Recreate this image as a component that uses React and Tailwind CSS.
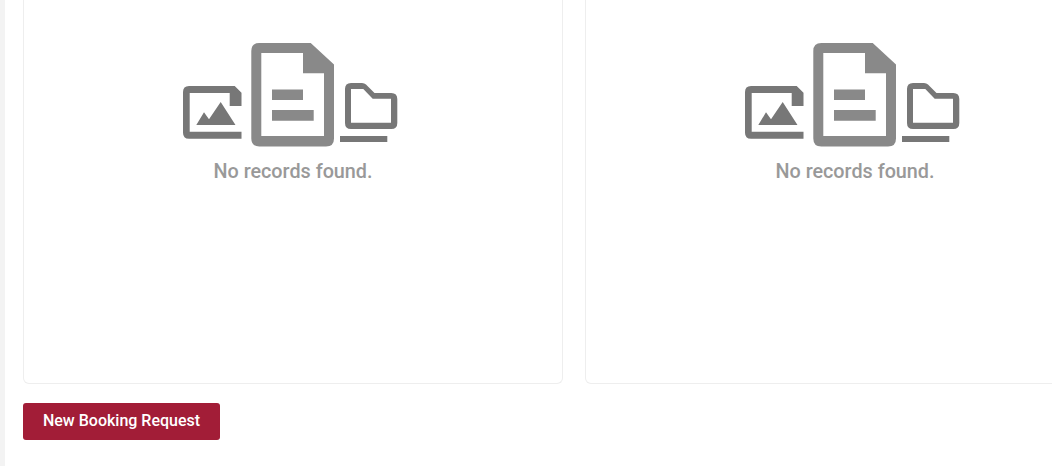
function EmptyIcon() {
  return (
    <svg width="215" height="104" viewBox="183 43 215 104" className="block ml-[-5px]">
      <path fill="#777777" fillRule="evenodd" d="M189 86H234.7L241.5 92.7V106H229.7V93H189.7V131.7H241.5V138.7H189Q183 138.7 183 132.7V92Q183 86 189 86Z" />
      <path fill="#777777" d="M196.3 125L204 112.3L209 119.3L220.7 102L235.5 125Z" />
      <path fill="#898989" fillRule="evenodd" d="M259.3 43H310.7L334 64.5V138.5Q334 146.5 326 146.5H259.3Q251.3 146.5 251.3 138.5V51Q251.3 43 259.3 43ZM261.3 53V136H324V73.3H303V53Z" />
      <path fill="#898989" d="M272 89.5H303V100H272ZM272 110H313.7V120.7H272Z" />
      <path fill="#777777" fillRule="evenodd" d="M351 83H362Q364.5 83 366 84.5L374.5 93H391.3Q397.3 93 397.3 99V123Q397.3 129 391.3 129H351Q345 129 345 123V89Q345 83 351 83ZM351 89V122.7H391V98.7H372.7L363.3 89Z" />
      <path fill="#777777" d="M340 136H387.3V142H340Z" />
    </svg>
  );
}

function Card({ className }) {
  return (
    <div className={`h-[384px] shrink-0 bg-white border border-t-0 border-[#eeeeee] rounded-b-md flex flex-col items-center pt-[43px] ${className}`}>
      <EmptyIcon />
      <p className="mt-[12px] text-[19.8px] leading-[26px] font-medium text-[#999999] [font-family:Roboto,sans-serif]">
        No records found.
      </p>
    </div>
  );
}

export default function App() {
  return (
    <div className="h-[466px] w-[1052px] overflow-hidden flex bg-white [font-family:Roboto,sans-serif]">
      <div className="w-[5px] shrink-0 bg-[#f3f3f3]" />
      <main className="pl-[18px] min-w-0 flex-1">
        <div className="flex gap-[22px]">
          <Card className="w-[540px]" />
          <Card className="w-[540px]" />
        </div>
        <button className="mt-[19px] w-[197px] h-[37px] pb-[2px] rounded-[3px] bg-[#a21d37] text-white text-[16px] font-medium">
          New Booking Request
        </button>
      </main>
    </div>
  );
}
